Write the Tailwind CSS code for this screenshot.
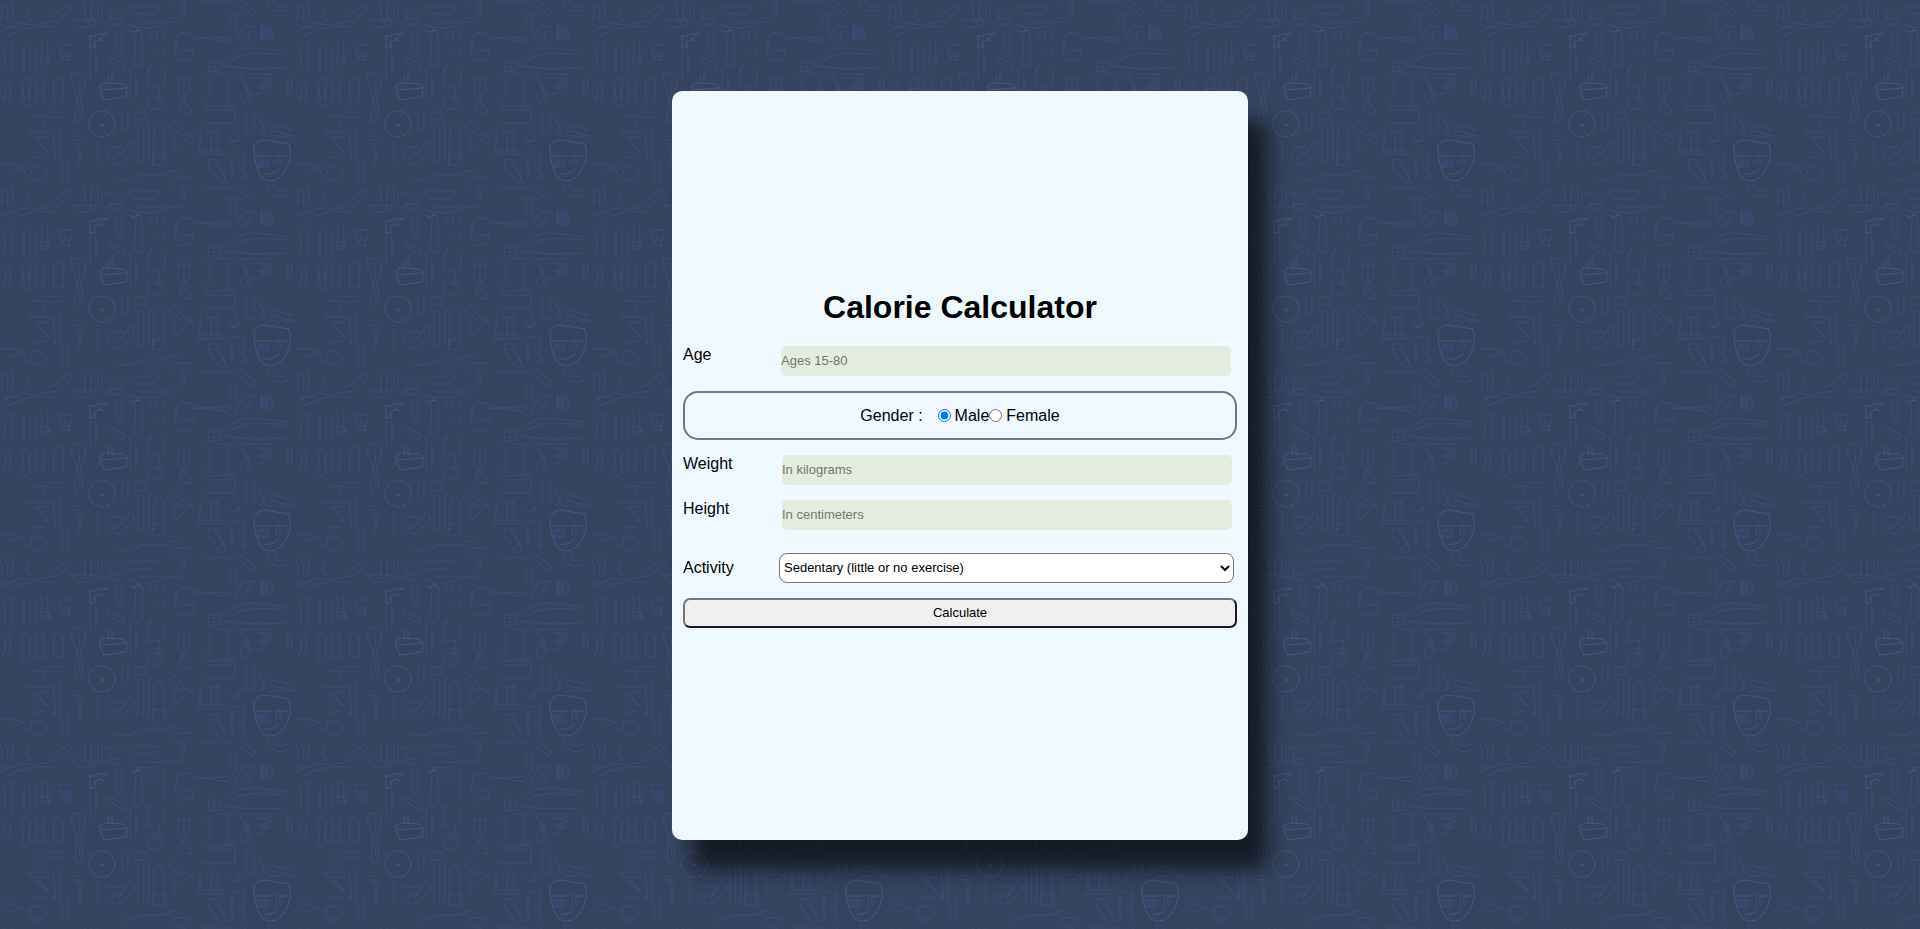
<!DOCTYPE html>
<html lang="en">
<head>
<meta charset="utf-8">
<meta name="viewport" content="width=device-width, initial-scale=1">
<title>Calorie Calculator</title>
<script src="https://cdn.jsdelivr.net/npm/@tailwindcss/browser@4"></script>
</head>
<body class="relative isolate flex min-h-screen items-center justify-center bg-[#36445f] pt-0.5 font-['Liberation_Sans',Arial,sans-serif] text-base text-black">
<svg class="absolute inset-0 -z-10 h-full w-full" aria-hidden="true">
  <defs>
    <pattern id="doodles" width="296" height="185" patternUnits="userSpaceOnUse">
      <rect width="296" height="185" fill="#36445f"/>
      <g fill="none" stroke="#3c5278" stroke-width="1" stroke-linecap="round" stroke-linejoin="round" opacity=".75">
        <!-- brushes, pens and shelves along the top -->
        <path d="M3 2q7 7 4 18M0 4q4 6 2 14M12 2q4 10-2 18M28 8q-4 10 4 12M50 18l18-14 5 4-16 14M85 2v18q3 8 6 0V2M98 2v20h12V8h-8v8M116 8q3 6 8 2M130 8q6-6 10 0M142 6h18l-6 8h-22M168 0h28M184 0v18M181 2v12M200 0h34M202 3h30M240 0l16 12-3 4-16-12M268 0q2 16 20 10M274 0q4 10 12 5"/>
        <path d="M72 20h24l-3 7H78l-4-4zM108 19h14l-4 6h-10M128 24q20 8 36 0l6-8M140 22h42M0 32l20-9 12 2 24-4M8 36q20-12 46-9M2 27h16"/>
        <!-- tools -->
        <path d="M108 32l-8 7 6 4M116 30v14q2 10 6 10V28M128 30l8 4-2 30q4 6 8 2V32l-6-4M150 32v8M157 32v8M164 32v8M152 50l6 4M164 48v8M176 58V38q2-8 16-4M180 50h14l-3 10h-14M194 36l34 6q6-6-4-5l-32 2M236 42q6-22 20-14M242 42l8-10M247 42l3-6M262 24v16h8V24M266 26v12M272 26v14M228 14h8v18M230 18v10"/>
        <path d="M24 46v25M30 44v26M36 48v22M42 42v14l-2 8h10l-3-8V40M48 52l4-5M90 50v30M96 52v22M106 56l18 8q2 8-4 4l-13-9M3 46l8-5v32M14 42v26M5 50v18M130 68v34M136 74v24M152 64q-8 14 2 20M160 66q10 8 2 20M148 66q-4 10 1 22M226 60q12-14 30-12l32 4M232 60q14-10 52-5M222 66l32 3 32-1M209 60h12l-2 11h-10zM212 63h6M212 67h6"/>
        <path d="M22 82q4-8 8 0v22q-4 4-8 0zM24 88h5v10h-5zM36 80q4-6 8 0v22h-8zM37 85h6M37 90h6M37 95h6M54 80q5-6 9 0v22h-9zM72 74q12-4 14 8l-5 14 2 20q-6 14-8 2l2-22-5-12zM78 78q3 10 0 20l2 18M150 86h10l-2 8 7 8q-8 12-18 5l3-10M152 92l9 11M178 76v18l4 6q-6 16 10 13l-4-8-6-2 8-14V76M184 78v20M179 80h10M204 76l6 3v18l-6 4M216 74h18M226 76v26M229 76v26M222 104h14M240 74h32v8l-10 2v10h-12v8h-8l-2-7 6-6-4-10zM254 78h14M258 86h12M246 80v12M292 78v16M288 76v20"/>
        <path d="M204 106h31v17h-31M207 110h25M33 116h14l-3 8M46 112h16v5H50M2 84q6 2 3 14M5 78q9 5 4 24M0 94q5 4 2 8"/>
        <path d="M62 126v40M59 128v34M53 132H28l27 27zM48 137H36l12 14M72 136h9M72 140h8M76 143h8M80 146v18M78 148v18M98 140v24M122 112v16q4 6 6 0v-16M134 112h12v8h-12M138 126v36M143 124v38M149 122v40M154 160V132q4-14 10 0v28M153 154h13v11h-13zM166 122l14 13h12M172 120q6 2 8 8l12 10M174 136v16l14-14M200 130v24M206 132h12M218 130v22M211 134v18M196 154h28M202 150h22M228 136q6 10 10 2M236 130l4 10-9 3M246 110v20q-4 6 0 4h8v-22M258 116l5 10q4 10-4 9M268 124l24 6M270 130l24 6M268 136h26"/>
        <path d="M112 162q2-9 10-9l8-12q7 4 3 9l-10 11q-4 5-10 2M118 158l11-14M108 147h16M110 154l-4 7M1 164h14l8 4-12 3M24 172q8-9 18-5l5 5q-3 10-14 8zM32 168q-4 7 3 11M30 160q5-5 15-3M62 168v14M68 160v21M208 160q10-4 12 6l6 14q-4 6-8 0l-8-12zM216 164l12 18M230 152h14v28M232 156v24M240 166l8 12M116 180h14l12-5h26M166 174q8-7 15 0M172 178h22"/>
      </g>
      <g fill="none" stroke="#466088" stroke-width="1" stroke-linecap="round" stroke-linejoin="round" opacity=".75">
        <!-- tap -->
        <path d="M90 36v12h5v-7l7-2M90 36h5l3-2h9M132 32l8-2"/>
        <!-- stamp -->
        <path d="M100 86l4-3 19 1 4 3-1 10-22 3-3-7zM102 90l24-2M108 83v-7M112 82v-7"/>
        <!-- saw blade -->
        <circle cx="102" cy="124" r="13" stroke-dasharray="4 2"/>
        <circle cx="102" cy="125" r="1"/>
        <!-- theatre mask -->
        <path d="M254 146q5-8 17-5l18 3q4 14-3 26-10 16-23 9-10-13-9-33z"/>
        <path d="M256 156h16M276 156h11M264 174q9 2 14-5"/>
      </g>
      <g fill="none" stroke="#3b5490" stroke-width="1" opacity=".7">
        <path d="M59 45h12M60 49l3 9 3-7 3 7 3-9M60 60h11M42 57h8M43 61h8M261 26v12M264 26v12M267 26v12M258 160h10v7h-10zM261 161v5M264 161v5M276 158v7M280 158v7M248 84v14M262 80h8M262 88h8M153 98h8"/>
      </g>
    </pattern>
  </defs>
  <rect width="100%" height="100%" fill="url(#doodles)"/>
</svg>
<main class="flex min-h-[749px] w-[30%] min-w-[480px] flex-col justify-center rounded-[10px] bg-[#f0f8ff] px-[11px] pb-3.5 shadow-[20px_30px_20px_rgba(0,0,0,0.6)]">
  <h1 class="mb-[22px] text-center text-[32px] leading-[34px] font-bold">Calorie Calculator</h1>
  <form class="flex flex-col gap-[15px]">
    <div class="flex justify-between pr-[6px]">
      <label for="age" class="leading-[18px]">Age</label>
      <input id="age" type="text" placeholder="Ages 15-80" class="h-[30px] w-[450px] rounded-[5px] bg-[#e4ecdf] text-[13px] placeholder:text-[#757575]">
    </div>
    <div class="flex h-[49px] items-center justify-center rounded-[15px] border-2 border-[#76767b]">
      <span class="mr-[15px] pt-0.5">Gender :</span>
      <input id="male" type="radio" name="gender" checked class="mr-1 size-[13px]">
      <label for="male" class="pt-0.5">Male</label>
      <input id="female" type="radio" name="gender" class="mr-1 size-[13px]">
      <label for="female" class="pt-0.5">Female</label>
    </div>
    <div class="flex justify-between pr-[5px]">
      <label for="weight" class="leading-[18px]">Weight</label>
      <input id="weight" type="text" placeholder="In kilograms" class="h-[30px] w-[450px] rounded-[5px] bg-[#e4ecdf] text-[13px] placeholder:text-[#757575]">
    </div>
    <div class="flex justify-between pr-[5px]">
      <label for="height" class="leading-[18px]">Height</label>
      <input id="height" type="text" placeholder="In centimeters" class="h-[30px] w-[450px] rounded-[5px] bg-[#e4ecdf] text-[13px] placeholder:text-[#757575]">
    </div>
    <div class="mt-2 flex items-center justify-between pr-[3px]">
      <label for="activity">Activity</label>
      <select id="activity" class="h-[30px] w-[455px] rounded-[8px] border border-[#767676] bg-white text-[13px]">
        <option>Sedentary (little or no exercise)</option>
        <option>Light (exercise 1-3 times a week)</option>
        <option>Moderate (exercise 4-5 times a week)</option>
        <option>Active (daily exercise)</option>
      </select>
    </div>
    <button type="button" class="h-[30px] rounded-[7px] border-2 border-t-[#767676] border-r-[#1b1b22] border-b-[#1b1b22] border-l-[#767676] bg-[#efefef] text-[13px]">Calculate</button>
  </form>
</main>
</body>
</html>
